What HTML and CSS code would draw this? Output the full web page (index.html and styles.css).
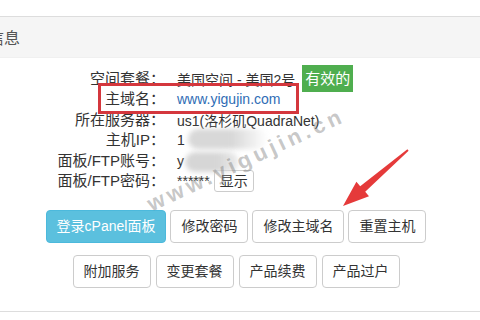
FILE: index.html
```html
<!DOCTYPE html>
<html lang="zh-CN">
<head>
<meta charset="utf-8">
<title>产品信息</title>
<link rel="stylesheet" href="styles.css">
</head>
<body>
<div class="panel">
  <div class="panel-heading"><span class="title">信息</span></div>
  <div class="panel-body">
    <div class="info">
      <div class="label">空间套餐：</div>
      <div class="value">美国空间 - 美国2号<span class="badge">有效的</span></div>
      <div class="label">主域名：</div>
      <div class="value"><span class="link">www.yigujin.com</span></div>
      <div class="label">所在服务器：</div>
      <div class="value">us1(洛杉矶QuadraNet)</div>
      <div class="label">主机IP：</div>
      <div class="value">1<span class="blur blur-ip"></span></div>
      <div class="label">面板/FTP账号：</div>
      <div class="value">y<span class="blur blur-user"></span></div>
      <div class="label">面板/FTP密码：</div>
      <div class="value">******<button class="btn-show">显示</button></div>
    </div>
    <div class="actions">
      <div class="btn-row">
        <button class="btn btn-primary">登录cPanel面板</button>
        <button class="btn">修改密码</button>
        <button class="btn">修改主域名</button>
        <button class="btn">重置主机</button>
      </div>
      <div class="btn-row row2">
        <button class="btn">附加服务</button>
        <button class="btn">变更套餐</button>
        <button class="btn">产品续费</button>
        <button class="btn">产品过户</button>
      </div>
    </div>
  </div>
</div>
<div class="mark-box"></div>
<span class="watermark">www.yigujin.cn</span>
<svg class="arrow" width="480" height="320" viewBox="0 0 480 320">
  <polygon points="408.6,150.7 365.2,191.8 369,196.2 343,206 356.4,181.8 360.2,186.2 407.4,149.3" fill="#e53a3a"/>
</svg>
</body>
</html>
```

FILE: styles.css
```css
body {
  margin: 0;
  width: 480px;
  height: 320px;
  overflow: hidden;
  position: relative;
  background: #fff;
  color: #333;
  font-family: "Liberation Sans", "Noto Sans CJK SC", sans-serif;
}

.panel {
  margin-top: 16px;
  border-top: 1px solid #ddd;
  border-bottom: 1px solid #ddd;
}

.panel-heading {
  height: 40px;
  display: flex;
  align-items: center;
  background: #f5f5f5;
  border-bottom: 1px solid #f0f0f0;
  font-size: 16px;
  color: #555;
}

.title {
  margin-left: -12px;
}

.panel-body {
  padding: 10.5px 0 23px;
}

.info {
  display: grid;
  grid-template-columns: 165px auto;
  grid-auto-rows: 20.5px;
  column-gap: 12px;
  justify-content: start;
}

.label {
  font-size: 15px;
  line-height: 20.5px;
  text-align: right;
  white-space: nowrap;
}

.value {
  font-size: 14px;
  height: 20.5px;
  display: flex;
  align-items: center;
  white-space: nowrap;
}

.badge {
  flex: none;
  margin-left: 7px;
  height: 27px;
  line-height: 27px;
  padding: 0 3px;
  background: #4fae4f;
  color: #fff;
  font-size: 15px;
}

.link {
  color: #2f6db5;
}

.blur {
  flex: none;
  display: inline-block;
  height: 20px;
  border-radius: 10px;
  filter: blur(2.5px);
}

.blur-ip {
  width: 80px;
  margin-left: 3px;
  margin-top: -3px;
  background: linear-gradient(to right, #d8d8d8 55%, rgba(232, 232, 232, 0));
}

.blur-user {
  width: 54px;
  margin-left: 1px;
  margin-top: 2px;
  background: linear-gradient(to right, #d6d6d6 60%, rgba(225, 225, 225, 0.6));
}

.btn-show {
  margin-left: 4px;
  height: 22px;
  padding: 0 5px;
  border: 1px solid #ccc;
  border-radius: 3px;
  background: #fff;
  color: #333;
  font: 14px/20px "Liberation Sans", "Noto Sans CJK SC", sans-serif;
}

.actions {
  margin-top: 18.5px;
  padding-right: 8px;
  display: flex;
  flex-direction: column;
  gap: 12px;
}

.btn-row {
  display: flex;
  justify-content: center;
  gap: 4px;
}

.row2 {
  gap: 5px;
}

.btn {
  height: 33px;
  padding: 0 10px;
  border: 1px solid #ccc;
  border-radius: 4px;
  background: #fff;
  color: #333;
  font: 14px/31px "Liberation Sans", "Noto Sans CJK SC", sans-serif;
  white-space: nowrap;
}

.btn-primary {
  background: #5bc0de;
  border-color: #4cb9dc;
  color: #fff;
}

.mark-box {
  position: absolute;
  left: 98px;
  top: 83px;
  width: 201px;
  height: 31px;
  box-sizing: border-box;
  border: 3px solid #d4373d;
}

.watermark {
  position: absolute;
  left: 246px;
  top: 160px;
  transform: translate(-50%, -50%) rotate(-25deg);
  font: bold 22px "Liberation Sans", sans-serif;
  letter-spacing: 4px;
  color: rgba(120, 120, 120, 0.42);
  white-space: nowrap;
  pointer-events: none;
}

.arrow {
  position: absolute;
  left: 0;
  top: 0;
  pointer-events: none;
}
```
